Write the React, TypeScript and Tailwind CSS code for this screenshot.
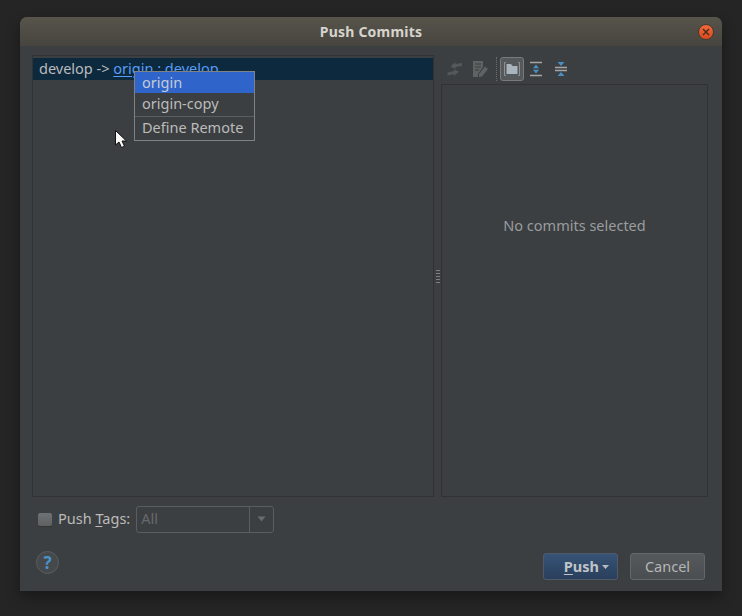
function ToolbarIcons() {
  return (
    <div className="flex h-[28px] items-center pl-[3px] pb-[2px]">
      {/* collapse arrows, disabled */}
      <svg width="20" height="20" viewBox="0 0 20 20" className="ml-[1px]">
        <path d="M10.5 3 L5.5 7.5 L10.5 10 Z M10.5 5 L17 4 V7 L10.5 8 Z" fill="#55585a" />
        <path d="M9 17 L14 12.5 L9 10.5 Z M9 15 L2.5 16.5 V13.5 L9 12 Z" fill="#55585a" />
      </svg>
      {/* edit commit message, disabled */}
      <svg width="20" height="20" viewBox="0 0 20 20" className="ml-[5px]">
        <path d="M3 2 H13 V8 L8 15 V18 H3 Z" fill="#5f6263" />
        <path d="M5 5 H11 M5 8 H11 M5 11 H9" stroke="#3c3f41" strokeWidth="1.2" />
        <path d="M9 15 L15 7.5 L18 10 L12 17.5 L9 18 Z" fill="#5f6263" />
      </svg>
      <div className="ml-[6px] h-[24px] border-l border-dotted border-[#6a6d6f]" />
      {/* group by directory, toggled on */}
      <div className="ml-[3px] flex h-[24px] w-[24px] items-center justify-center rounded-[3px] border border-[#787b7e] bg-[#55595c]">
        <svg width="18" height="18" viewBox="0 0 18 18">
          <path d="M3 2.5 H1.5 V15.5 H3" fill="none" stroke="#8d9194" strokeWidth="1" />
          <path d="M15 2.5 H16.5 V15.5 H15" fill="none" stroke="#8d9194" strokeWidth="1" />
          <path d="M3.5 4 H8 L9.5 6 H14.5 V14 H3.5 Z" fill="#a9b4bc" />
        </svg>
      </div>
      {/* expand all */}
      <svg width="18" height="18" viewBox="0 0 18 18" className="ml-[3px]">
        <path d="M3 2.5 H15 M3 15.5 H15" stroke="#a5a5a5" strokeWidth="1.6" />
        <path d="M9 4.5 L12 8.2 H6 Z M9 13.5 L6 9.8 H12 Z" fill="#4a8fc4" />
      </svg>
      {/* collapse all */}
      <svg width="18" height="18" viewBox="0 0 18 18" className="ml-[7px]">
        <path d="M3 7.5 H15 M3 10.5 H15" stroke="#a5a5a5" strokeWidth="1.6" />
        <path d="M9 6 L5.5 2 H12.5 Z M9 12 L12.5 16 H5.5 Z" fill="#4a8fc4" />
      </svg>
    </div>
  )
}

function CloseButton() {
  return (
    <div className="flex h-[16px] w-[16px] items-center justify-center rounded-full border border-[#4a3a30] bg-gradient-to-b from-[#ef6a3a] to-[#d9481c]">
      <svg width="8" height="8" viewBox="0 0 8 8">
        <path d="M1 1 L7 7 M7 1 L1 7" stroke="#3c2a20" strokeWidth="1.3" />
      </svg>
    </div>
  )
}

export default function App() {
  return (
    <div className="relative h-[616px] w-[742px] overflow-hidden bg-[#252525] pl-[20px] pt-[17px] font-['Noto_Sans',sans-serif] text-[14.5px] text-[#bbbbbb]">
      <div className="flex h-[574px] w-[702px] flex-col overflow-hidden rounded-t-[7px] bg-[#3c3f41] shadow-[0_6px_14px_rgba(0,0,0,0.35)]">
        {/* title bar */}
        <div className="relative flex h-[29px] shrink-0 items-center justify-center bg-gradient-to-b from-[#57544b] to-[#47453f]">
          <span className="text-[14px] font-bold tracking-[0.2px] text-[#d6d4cd]">Push Commits</span>
          <div className="absolute right-[8px] top-[7px]">
            <CloseButton />
          </div>
        </div>

        {/* splitter area */}
        <div className="flex h-[451px] shrink-0 pl-[12px] pr-[14px] pt-[9px]">
          <div className="h-[442px] w-[402px] border border-[#323232] pt-[2px]">
            <div className="flex h-[22px] items-center whitespace-nowrap bg-[#0d293e] pl-[6px]">
              <span>develop -&gt;&nbsp;</span>
              <span className="text-[#589df6] underline underline-offset-2">origin</span>
              <span className="text-[#589df6]">&nbsp;:&nbsp;develop</span>
            </div>
          </div>
          <div className="flex w-[7px] items-center justify-center">
            <div className="h-[15px] w-[4px] bg-[radial-gradient(#7d8082_0.6px,transparent_0.7px)] bg-[length:2px_3px]" />
          </div>
          <div className="flex h-[442px] w-[267px] flex-col pt-[1px]">
            <ToolbarIcons />
            <div className="flex h-[413px] items-center justify-center border border-[#323232] pb-[129px]">
              <span className="text-[#9a9c9e]">No commits selected</span>
            </div>
          </div>
        </div>

        {/* push tags */}
        <div className="mt-[8px] flex h-[27px] shrink-0 items-center pl-[18px] pt-[1px]">
          <div className="h-[13px] w-[14px] rounded-[2px] bg-gradient-to-b from-[#6f7273] to-[#5e6162] shadow-[0_1px_0_#333]" />
          <span className="ml-[6px]">
            Push <span className="underline underline-offset-2">T</span>ags:
          </span>
          <div className="ml-[6px] flex h-[27px] w-[138px] items-center rounded-[3px] border border-[#5b5e60]">
            <span className="w-[112px] pl-[4px] text-[#66696b]">All</span>
            <div className="flex h-full flex-1 items-center justify-center border-l border-[#5b5e60]">
              <svg width="9" height="6" viewBox="0 0 9 6">
                <path d="M0.5 0.5 H8.5 L4.5 5.5 Z" fill="#696c6e" />
              </svg>
            </div>
          </div>
        </div>

        {/* bottom buttons */}
        <div className="flex flex-1 items-start justify-between pl-[16px] pr-[17px] pt-[17px]">
          <div className="mt-[2px] flex h-[23px] w-[23px] items-center justify-center rounded-full border border-[#5b5e60] bg-[#46494b] text-[17px] font-bold text-[#4a93c9]">
            ?
          </div>
          <div className="flex gap-[12px] pt-[4px]">
            <div className="flex h-[27px] w-[75px] items-center justify-end rounded-[3px] border border-[#4e5a6a] bg-gradient-to-b from-[#375377] to-[#293f5c] pr-[8px] font-bold text-[#c0c4c8]">
              <span className="underline underline-offset-2 decoration-1">P</span>
              <span>ush</span>
              <svg width="7" height="4" viewBox="0 0 7 4" className="ml-[3px]">
                <path d="M0 0 H7 L3.5 4 Z" fill="#b5b9bd" />
              </svg>
            </div>
            <div className="flex h-[27px] w-[75px] items-center justify-center rounded-[3px] border border-[#63666a] bg-gradient-to-b from-[#56595b] to-[#4b4e50] text-[#b4b6b8]">
              Cancel
            </div>
          </div>
        </div>
      </div>

      {/* remote popup */}
      <div className="absolute left-[134px] top-[71px] w-[121px] border border-[#7f8284] bg-[#3c3f41]">
        <div className="flex h-[21px] items-center bg-[#2f65ca] pl-[7px] text-[#c5cbd6]">origin</div>
        <div className="flex h-[23px] items-center pb-[2px] pl-[7px]">origin-copy</div>
        <div className="flex h-[24px] items-center border-t border-[#5b5e60] pb-[2px] pl-[7px]">Define Remote</div>
      </div>

      {/* mouse cursor */}
      <svg width="16" height="22" viewBox="0 0 16 22" className="absolute left-[113px] top-[129px]">
        <path d="M2.5 1.5 V16 L6 13 L8.5 18.5 L11.5 17.2 L9 12 H13.5 Z" fill="#f8f8f8" stroke="#111" strokeWidth="1" />
      </svg>
    </div>
  )
}
